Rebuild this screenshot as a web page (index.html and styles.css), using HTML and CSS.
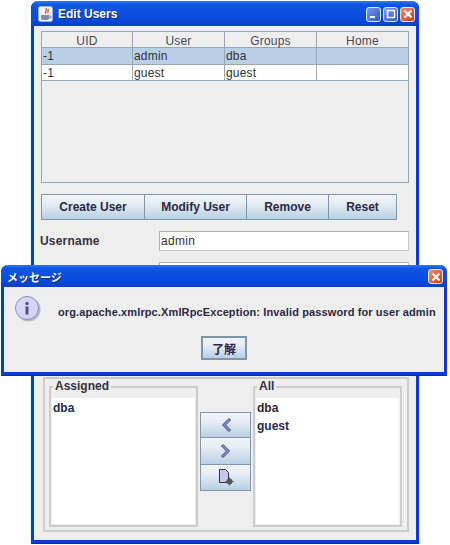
FILE: index.html
```html
<!DOCTYPE html>
<html>
    <head>
        <meta charset="UTF-8">
        <title>Edit Users</title>
        <link rel="stylesheet" href="styles.css">
    </head>
    <body>
        <div class="window">
            <div class="titlebar">
                <svg class="app-icon" width="15" height="16" viewBox="0 0 15 16">
                    <rect x="0.5" y="0.5" width="14" height="15" rx="2" fill="#f2f2f2" stroke="#9fb4d8"/>
                    <path d="M8 2c2 2-2 3 0 6M10 3c1 2-1 3 0 4" fill="none" stroke="#d9602a" stroke-width="1.4"/>
                    <path d="M3 9h8v3c0 1-1 2-2 2H5c-1 0-2-1-2-2z" fill="#7d8ba3"/>
                    <path d="M11 10h2v2h-2" fill="none" stroke="#7d8ba3"/>
                </svg>
                <span class="title-text">Edit Users</span>
                <div class="title-buttons">
                    <span class="wbtn wbtn-blue">
                        <svg width="14" height="14" viewBox="0 0 14 14"><rect x="3" y="9" width="5" height="2" fill="#fff"/></svg>
                    </span>
                    <span class="wbtn wbtn-blue">
                        <svg width="14" height="14" viewBox="0 0 14 14"><rect x="3.5" y="3.5" width="7" height="7" fill="none" stroke="#fff" stroke-width="1.5"/></svg>
                    </span>
                    <span class="wbtn wbtn-red">
                        <svg width="14" height="14" viewBox="0 0 14 14"><path d="M3.5 3.5l7 7M10.5 3.5l-7 7" stroke="#fff" stroke-width="2.2"/></svg>
                    </span>
                </div>
            </div>

            <div class="content">
                <div class="table-box">
                    <div class="t-row t-head">
                        <div>UID</div><div>User</div><div>Groups</div><div>Home</div>
                    </div>
                    <div class="t-row t-selected">
                        <div>-1</div><div>admin</div><div>dba</div><div></div>
                    </div>
                    <div class="t-row">
                        <div>-1</div><div>guest</div><div>guest</div><div></div>
                    </div>
                </div>

                <div class="toolbar">
                    <button class="btn btn-create">Create User</button>
                    <button class="btn btn-modify">Modify User</button>
                    <button class="btn btn-remove">Remove</button>
                    <button class="btn btn-reset">Reset</button>
                </div>

                <div class="form-row">
                    <label>Username</label>
                    <div class="field">admin</div>
                </div>
                <div class="form-row">
                    <label></label>
                    <div class="field"></div>
                </div>

                <div class="groups-panel">
                    <fieldset class="group">
                        <legend>Assigned</legend>
                        <div class="list">
                            <div>dba</div>
                        </div>
                    </fieldset>
                    <div class="move-buttons">
                        <button class="btn-icon">
                            <svg width="14" height="16" viewBox="0 0 14 16"><path d="M10 1.5L3.5 8l6.5 6.5 1.5-1.5L6.5 8l5-5z" fill="#8f94d8" stroke="#3d4270"/></svg>
                        </button>
                        <button class="btn-icon">
                            <svg width="14" height="16" viewBox="0 0 14 16"><path d="M4 1.5L10.5 8 4 14.5 2.5 13l5-5-5-5z" fill="#8f94d8" stroke="#3d4270"/></svg>
                        </button>
                        <button class="btn-icon">
                            <svg width="16" height="18" viewBox="0 0 16 18">
                                <path d="M1.5 1.5h6l3 3v10h-9z" fill="#c9c6ee" stroke="#333"/>
                                <circle cx="11.5" cy="13.5" r="3" fill="#555"/>
                                <path d="M11.5 9.5v8M7.5 13.5h8" stroke="#555"/>
                            </svg>
                        </button>
                    </div>
                    <fieldset class="group">
                        <legend>All</legend>
                        <div class="list">
                            <div>dba</div>
                            <div>guest</div>
                        </div>
                    </fieldset>
                </div>
            </div>
        </div>

        <div class="dialog">
            <div class="titlebar dialog-title">
                <span class="title-text jp">メッセージ</span>
                <div class="title-buttons">
                    <span class="wbtn wbtn-red">
                        <svg width="14" height="14" viewBox="0 0 14 14"><path d="M3.5 3.5l7 7M10.5 3.5l-7 7" stroke="#fff" stroke-width="2.2"/></svg>
                    </span>
                </div>
            </div>
            <div class="dialog-body">
                <div class="dialog-msg">
                    <svg class="info-icon" width="28" height="28" viewBox="0 0 28 28">
                        <circle cx="14.5" cy="14.5" r="12" fill="#b9b9c4"/>
                        <circle cx="13" cy="13" r="11.5" fill="#d6d6f4" stroke="#8a8ac6"/>
                        <circle cx="13" cy="8.5" r="1.7" fill="#55557f"/>
                        <rect x="11.5" y="11.5" width="3" height="8" fill="#55557f"/>
                    </svg>
                    <p>org.apache.xmlrpc.XmlRpcException: Invalid password for user admin</p>
                </div>
                <button class="btn btn-ok">了解</button>
            </div>
        </div>
    </body>
</html>
```

FILE: styles.css
```css
* {
    margin: 0;
    padding: 0;
    box-sizing: border-box;
}

html, body {
    width: 450px;
    height: 545px;
    overflow: hidden;
}

body {
    background: #fff;
    font-family: "Liberation Sans", "Noto Sans CJK JP", sans-serif;
    font-size: 12px;
    color: #333;
    padding: 1px 0 0 31px;
}

.window {
    width: 388px;
    height: 542px;
    background: #eeeeee;
    border: 3px solid #0a3bd6;
    border-top: 0;
    border-radius: 7px 7px 0 0;
    box-shadow: 0 1px 0 #0a2fa8;
}

.titlebar {
    display: flex;
    align-items: center;
    height: 25px;
    margin: 0 -3px;
    padding: 1px 4px 0 7px;
    background: linear-gradient(#2f7bf2 0, #0f56e0 15%, #0a4ae0 70%, #0a3fc4 100%);
    border-radius: 7px 7px 0 0;
}

.app-icon {
    margin-right: 5px;
}

.title-text {
    color: #fff;
    font-weight: bold;
    font-size: 12px;
    text-shadow: 1px 1px 0 #0a2c8a;
}

.title-text.jp {
    font-size: 11px;
}

.title-buttons {
    margin-left: auto;
    display: flex;
    gap: 2px;
}

.wbtn {
    width: 15px;
    height: 15px;
    border: 1px solid #dfe8fb;
    border-radius: 3px;
    display: flex;
    align-items: center;
    justify-content: center;
    overflow: hidden;
}

.wbtn svg {
    flex: none;
}

.wbtn-blue {
    background: linear-gradient(135deg, #7c9bee, #2c56cf);
}

.wbtn-red {
    background: linear-gradient(135deg, #ef9073, #cf3a10);
}

.content {
    padding: 5px 7px 0 7px;
}

.table-box {
    width: 368px;
    height: 152px;
    border: 1px solid #98a5b2;
    background: #eeeeee;
}

.t-row {
    display: grid;
    grid-template-columns: 91px 92px 92px 91px;
    height: 16.5px;
    background: #fff;
    border-bottom: 1px solid #98a5b2;
    line-height: 16px;
    letter-spacing: 0.2px;
}

.t-row > div {
    border-right: 1px solid #98a5b2;
    padding-left: 1px;
    white-space: nowrap;
}

.t-row > div:last-child {
    border-right: 0;
}

.t-head {
    height: 16px;
    background: #eeeeee;
    border-bottom: 1px solid #98a5b2;
    color: #4a4a55;
    line-height: 18px;
}

.t-head > div {
    text-align: center;
    padding: 0;
}

.t-selected {
    background: #b8cfe5;
}

.toolbar {
    display: flex;
    margin-top: 11px;
}

.btn {
    height: 26px;
    font-family: inherit;
    font-size: 12px;
    font-weight: bold;
    color: #2a2a45;
    border: 1px solid #7f95aa;
    background: linear-gradient(#f0f4f8 0, #e6edf4 35%, #b8cfe5 100%);
}

.btn + .btn {
    border-left: 0;
}

.btn-create { width: 104px; }
.btn-modify { width: 102px; }
.btn-remove { width: 82px; }
.btn-reset { width: 68px; }

.form-row {
    display: flex;
    align-items: center;
    margin-top: 11px;
}

.form-row label {
    width: 118px;
    margin-left: -1px;
    margin-right: 1px;
    font-weight: bold;
    color: #333340;
    letter-spacing: 0.2px;
}

.field {
    width: 250px;
    height: 20px;
    background: #fff;
    border: 1px solid #a8b0b8;
    border-right-color: #c8c8c8;
    border-bottom-color: #c8c8c8;
    line-height: 18px;
    padding-left: 1px;
    letter-spacing: 0.3px;
}

.groups-panel {
    display: flex;
    align-items: flex-start;
    width: 366px;
    height: 155px;
    margin: 95px 0 0 2px;
    padding: 1px 4px 0 4px;
    border: 2px solid #cccccc;
}

.group {
    width: 149px;
    height: 147px;
    flex: none;
    border: 2px solid #cccccc;
    padding: 5px 1px 1px 1px;
    display: flex;
    flex-direction: column;
}

.group legend {
    padding: 0 2px;
    margin-left: 1px;
    font-weight: bold;
    color: #333340;
    line-height: 13px;
}

.list {
    flex: 1;
    background: #fff;
    padding: 1px 0 0 1px;
    font-weight: bold;
    color: #2a2a45;
    line-height: 18px;
}

.move-buttons {
    width: 51px;
    margin: 32px 2px 0 2px;
    display: flex;
    flex-direction: column;
    flex: none;
}

.btn-icon {
    height: 26.4px;
    border: 1px solid #7f95aa;
    background: linear-gradient(#f0f4f8 0, #e6edf4 35%, #b8cfe5 100%);
    display: flex;
    align-items: center;
    justify-content: center;
}

.btn-icon + .btn-icon {
    border-top: 0;
}

.dialog {
    position: absolute;
    left: 1px;
    top: 265px;
    width: 446px;
    height: 110px;
    background: #eeeeee;
    border: 3px solid #0a3bd6;
    border-top: 0;
    border-radius: 7px 7px 0 0;
    box-shadow: 0 1px 0 #0a2fa8;
}

.dialog-title {
    height: 22px;
    padding-left: 6px;
}

.dialog-body {
    text-align: center;
}

.dialog-msg {
    display: flex;
    align-items: center;
    height: 49px;
    padding-left: 10px;
}

.dialog-msg p {
    margin-left: 16px;
    font-size: 11px;
    font-weight: bold;
    letter-spacing: 0.12px;
    color: #2a2a45;
    white-space: nowrap;
}

.info-icon {
    flex: none;
    margin-top: -5px;
}

.btn-ok {
    width: 46px;
    height: 24px;
    border: 2px solid #7f95aa;
    font-size: 12px;
}
```
